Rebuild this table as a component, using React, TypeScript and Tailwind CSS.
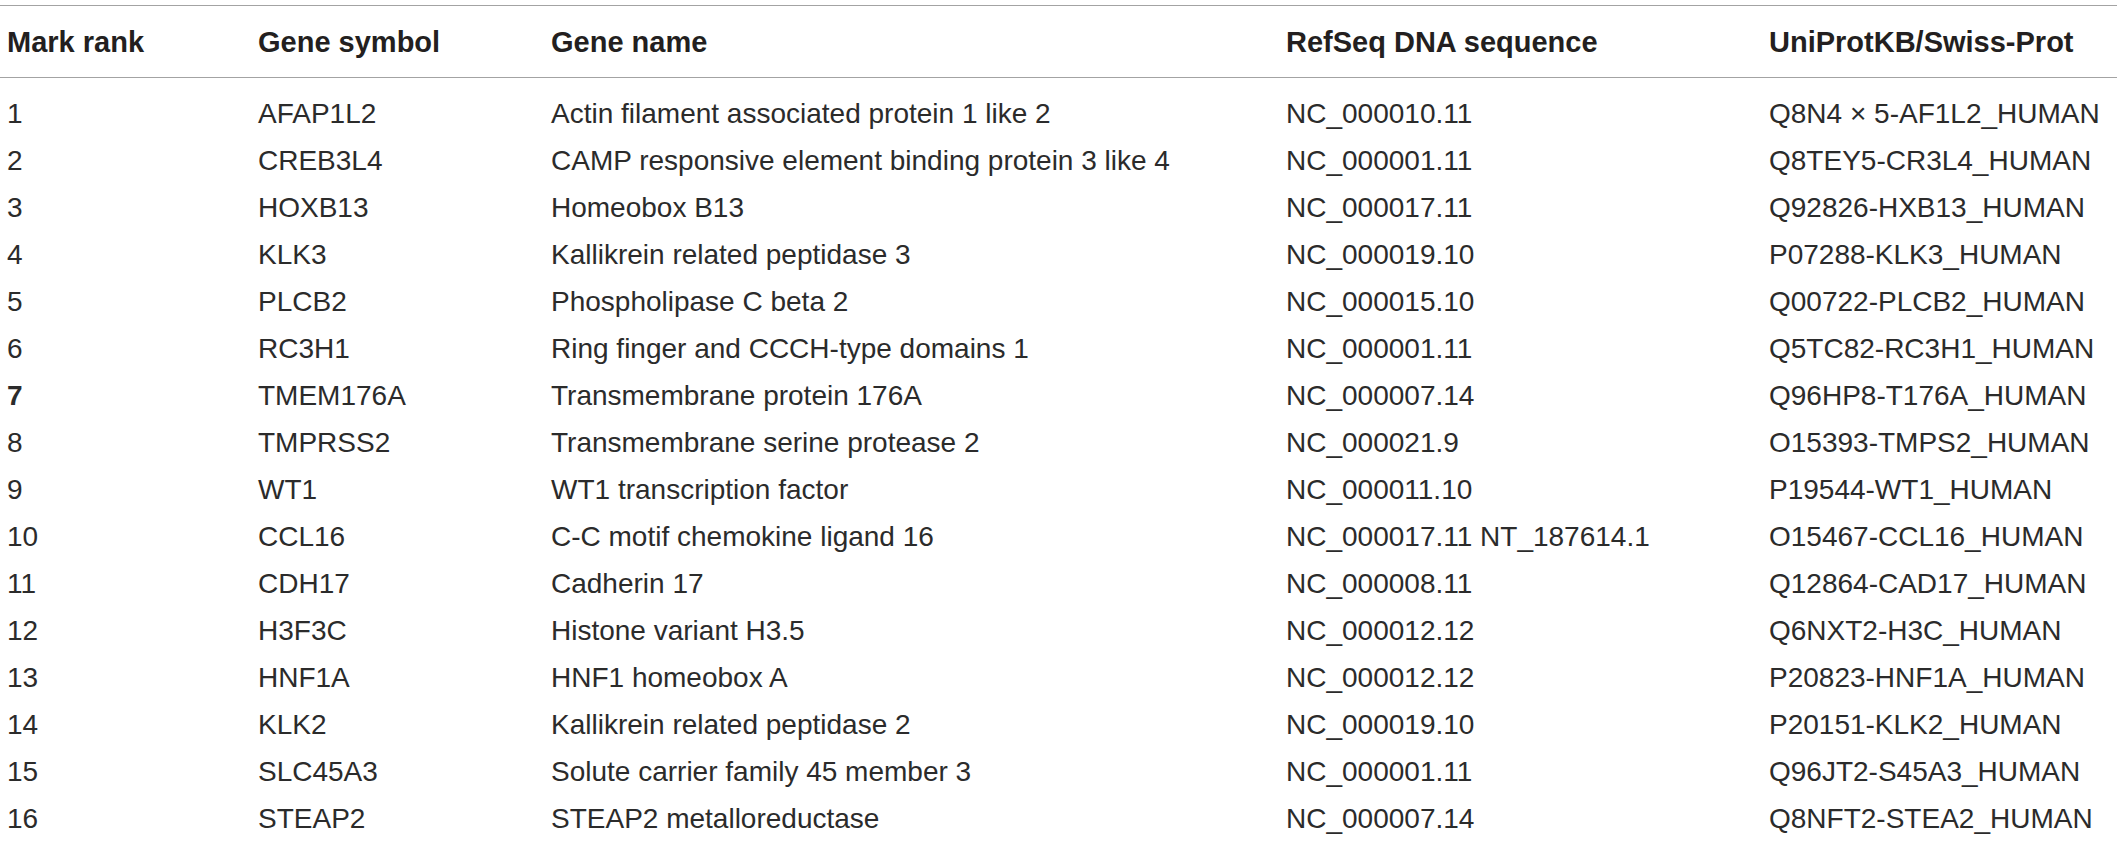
const rows: [string, string, string, string, string][] = [
  ["1", "AFAP1L2", "Actin filament associated protein 1 like 2", "NC_000010.11", "Q8N4 × 5-AF1L2_HUMAN"],
  ["2", "CREB3L4", "CAMP responsive element binding protein 3 like 4", "NC_000001.11", "Q8TEY5-CR3L4_HUMAN"],
  ["3", "HOXB13", "Homeobox B13", "NC_000017.11", "Q92826-HXB13_HUMAN"],
  ["4", "KLK3", "Kallikrein related peptidase 3", "NC_000019.10", "P07288-KLK3_HUMAN"],
  ["5", "PLCB2", "Phospholipase C beta 2", "NC_000015.10", "Q00722-PLCB2_HUMAN"],
  ["6", "RC3H1", "Ring finger and CCCH-type domains 1", "NC_000001.11", "Q5TC82-RC3H1_HUMAN"],
  ["7", "TMEM176A", "Transmembrane protein 176A", "NC_000007.14", "Q96HP8-T176A_HUMAN"],
  ["8", "TMPRSS2", "Transmembrane serine protease 2", "NC_000021.9", "O15393-TMPS2_HUMAN"],
  ["9", "WT1", "WT1 transcription factor", "NC_000011.10", "P19544-WT1_HUMAN"],
  ["10", "CCL16", "C-C motif chemokine ligand 16", "NC_000017.11 NT_187614.1", "O15467-CCL16_HUMAN"],
  ["11", "CDH17", "Cadherin 17", "NC_000008.11", "Q12864-CAD17_HUMAN"],
  ["12", "H3F3C", "Histone variant H3.5", "NC_000012.12", "Q6NXT2-H3C_HUMAN"],
  ["13", "HNF1A", "HNF1 homeobox A", "NC_000012.12", "P20823-HNF1A_HUMAN"],
  ["14", "KLK2", "Kallikrein related peptidase 2", "NC_000019.10", "P20151-KLK2_HUMAN"],
  ["15", "SLC45A3", "Solute carrier family 45 member 3", "NC_000001.11", "Q96JT2-S45A3_HUMAN"],
  ["16", "STEAP2", "STEAP2 metalloreductase", "NC_000007.14", "Q8NFT2-STEA2_HUMAN"],
]

const headers = ["Mark rank", "Gene symbol", "Gene name", "RefSeq DNA sequence", "UniProtKB/Swiss-Prot"]

const cols = "grid grid-cols-[258px_293px_735px_483px_1fr]"

export default function App() {
  return (
    <div className="w-[2117px] h-[841px] overflow-hidden bg-white pt-[5px] font-['Liberation_Sans',Arial,sans-serif] text-[#231f20]">
      {/* header */}
      <div className={`${cols} h-[73px] items-center border-y border-[#a3a3a3] text-[29px] font-bold`}>
        {headers.map((h, i) => (
          <div key={h} className={i === 0 ? "pl-[7px] pt-[2px]" : "pt-[2px]"}>
            {h}
          </div>
        ))}
      </div>

      {/* body */}
      <div className="pt-[12px] text-[28px] text-[#2b2b2b]">
        {rows.map((r) => (
          <div key={r[0]} className={`${cols} h-[47px] items-center`}>
            <div className={r[0] === "7" ? "pl-[7px] font-bold" : "pl-[7px]"}>{r[0]}</div>
            <div>{r[1]}</div>
            <div>{r[2]}</div>
            <div>{r[3]}</div>
            <div>{r[4]}</div>
          </div>
        ))}
      </div>
    </div>
  )
}
